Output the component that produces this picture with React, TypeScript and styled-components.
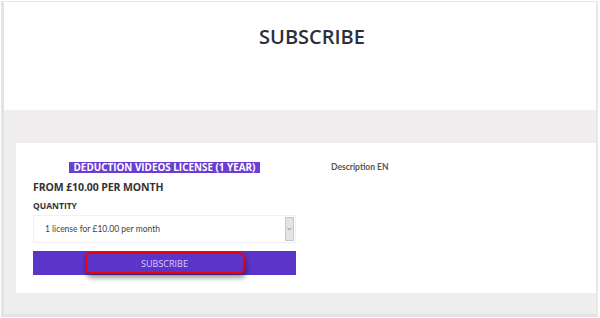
import React from "react";
import styled, { createGlobalStyle } from "styled-components";

const GlobalStyle = createGlobalStyle`
  html, body {
    margin: 0;
    padding: 0;
    background: #ffffff;
  }
  body {
    font-family: "Open Sans", "Liberation Sans", sans-serif;
  }
`;

const Frame = styled.div`
  box-sizing: border-box;
  width: 597px;
  height: 316px;
  margin: 1px 0 0 1px;
  border: 1px solid #e6e6e6;
  border-left: 3px solid #e3e3e3;
  border-right: 2px solid #e8e8e8;
  border-bottom: 3px solid #e3e3e3;
  box-shadow: inset 1px 1px 0 #f2f2f2;
  display: flex;
  flex-direction: column;
  overflow: hidden;
`;

const Header = styled.header`
  height: 108px;
  display: flex;
  justify-content: center;
  padding-top: 21px;
  box-sizing: border-box;
  background: #ffffff;
`;

const PageTitle = styled.h1`
  margin: 0;
  font-family: "Open Sans", sans-serif;
  font-weight: 600;
  font-size: 20px;
  letter-spacing: 0;
  color: #2b2f40;
  padding-left: 24px;
`;

const Band = styled.section`
  flex: 1;
  background: #efeded;
  padding: 33px 0 20px 12px;
`;

const Card = styled.div`
  background: #ffffff;
  height: 150px;
  display: flex;
  padding: 19px 0 0 17px;
  box-sizing: border-box;
`;

const LeftCol = styled.div`
  width: 263px;
  display: flex;
  flex-direction: column;
`;

const Badge = styled.div`
  align-self: center;
  background: #6a3dd3;
  color: #ffffff;
  font-family: "Open Sans", sans-serif;
  font-weight: 700;
  font-size: 9.9px;
  line-height: 11px;
  padding: 0 5px;
  white-space: nowrap;
`;

const Price = styled.div`
  margin-top: 7px;
  font-family: "Open Sans", sans-serif;
  font-weight: 700;
  font-size: 10.5px;
  color: #333333;
  letter-spacing: -0.1px;
`;

const Label = styled.div`
  margin-top: 6px;
  font-family: "Open Sans", sans-serif;
  font-weight: 700;
  font-size: 8.5px;
  color: #333333;
`;

const SelectBox = styled.div`
  position: relative;
  margin-top: 4px;
  height: 28px;
  border: 1px solid #f0f0f0;
  box-sizing: border-box;
  display: flex;
  align-items: center;
  padding-left: 11px;
  font-family: Lato, sans-serif;
  font-size: 8.5px;
  color: #444444;
`;

const Arrow = styled.div`
  position: absolute;
  right: 1px;
  top: 1px;
  bottom: 1px;
  width: 9px;
  background: #e4e4e4;
  border: 1px solid #c8c8c8;
  box-sizing: border-box;
  display: flex;
  align-items: center;
  justify-content: center;
`;

const SubmitBtn = styled.button`
  position: relative;
  margin-top: 8px;
  height: 24px;
  border: 0;
  background: #5b34c9;
  color: #d9ccff;
  font-family: "Open Sans", sans-serif;
  font-size: 9px;
  padding: 0;
  cursor: pointer;
`;

const Highlight = styled.span`
  position: absolute;
  left: 52px;
  top: 1px;
  width: 160px;
  height: 22px;
  box-sizing: border-box;
  border: 2.5px solid #f00000;
  border-radius: 6px;
  box-shadow: 1px 4px 5px rgba(0, 0, 0, 0.4);
`;

const Description = styled.div`
  margin: 0 0 0 35px;
  font-family: Lato, sans-serif;
  font-weight: 700;
  font-size: 8.5px;
  color: #555555;
`;

const App = () => {
  return (
    <>
      <GlobalStyle />
      <Frame>
        <Header>
          <PageTitle>SUBSCRIBE</PageTitle>
        </Header>
        <Band>
          <Card>
            <LeftCol>
              <Badge>DEDUCTION VIDEOS LICENSE (1 YEAR)</Badge>
              <Price>FROM £10.00 PER MONTH</Price>
              <Label>QUANTITY</Label>
              <SelectBox>
                1 license for £10.00 per month
                <Arrow>
                  <svg width="5" height="4" viewBox="0 0 5 4">
                    <path d="M0.5 1 L2.5 3 L4.5 1" stroke="#777" fill="none" strokeWidth="0.8" />
                  </svg>
                </Arrow>
              </SelectBox>
              <SubmitBtn>
                <Highlight />
                SUBSCRIBE
              </SubmitBtn>
            </LeftCol>
            <Description>Description EN</Description>
          </Card>
        </Band>
      </Frame>
    </>
  );
};

export default App;
